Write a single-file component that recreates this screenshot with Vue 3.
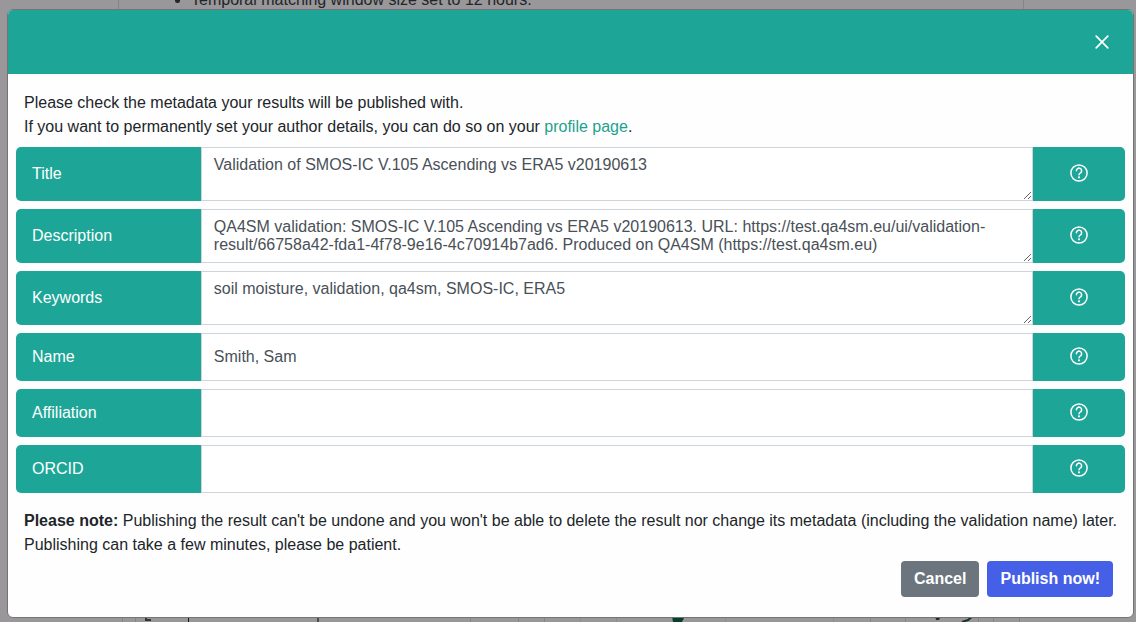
<script setup>
import { reactive } from 'vue'

const fields = reactive([
  { id: 'title', label: 'Title', multiline: true, value: 'Validation of SMOS-IC V.105 Ascending vs ERA5 v20190613' },
  {
    id: 'description',
    label: 'Description',
    multiline: true,
    value:
      'QA4SM validation: SMOS-IC V.105 Ascending vs ERA5 v20190613. URL: https://test.qa4sm.eu/ui/validation-result/66758a42-fda1-4f78-9e16-4c70914b7ad6. Produced on QA4SM (https://test.qa4sm.eu)',
  },
  { id: 'keywords', label: 'Keywords', multiline: true, value: 'soil moisture, validation, qa4sm, SMOS-IC, ERA5' },
  { id: 'name', label: 'Name', multiline: false, value: 'Smith, Sam' },
  { id: 'affiliation', label: 'Affiliation', multiline: false, value: '' },
  { id: 'orcid', label: 'ORCID', multiline: false, value: '' },
])
</script>

<template>
  <div class="page">
    <div class="behind">
      <div class="results">
        <ul>
          <li>Temporal matching window size set to 12 hours.</li>
        </ul>
      </div>
      <svg class="plots" viewBox="0 0 1136 6" preserveAspectRatio="none" aria-hidden="true">
        <path d="M122.500 0v6M135.500 0v6M470.500 0v6M518.500 0v6M544.500 0v6M870.500 0v6M905.500 0v6M978.500 0v6M993.500 0v6M1019.500 0v6" stroke="#858386" />
        <path d="M580.500 0v6M616.500 0v6M725.500 0v6M833.500 0v6" stroke="#8e8c8f" />
        <path d="M188.500 0v6" stroke="#151515" />
        <path d="M318 0v6" stroke="#4d4c4e" stroke-width="2" />
        <path d="M146 0v4h5" fill="none" stroke="#333" stroke-width="2" />
        <path d="M672 0h13l-3 6h-9z" fill="#073f2a" />
        <path d="M935 0h6l-2 4h-3z" fill="#222a28" />
        <path d="M962 6l6-2 5-4" fill="none" stroke="#17332d" stroke-width="2" />
      </svg>
    </div>

    <form class="modal" role="dialog" aria-modal="true" aria-label="Publish result" @submit.prevent>
      <header class="modal-header">
        <button type="button" class="close" aria-label="Close">
          <svg viewBox="0 0 14 14" aria-hidden="true"><path d="M1.200 1.200l11.600 11.600M12.800 1.200L1.200 12.800" /></svg>
        </button>
      </header>

      <div class="modal-body">
        <p class="text">
          Please check the metadata your results will be published with.<br />
          If you want to permanently set your author details, you can do so on your
          <a href="#profile">profile page</a>.
        </p>

        <div class="fields">
          <div v-for="field in fields" :key="field.id" class="row">
            <label :for="field.id">{{ field.label }}</label>
            <textarea v-if="field.multiline" :id="field.id" v-model="field.value" rows="2" spellcheck="false"></textarea>
            <input v-else :id="field.id" v-model="field.value" type="text" />
            <button type="button" class="help" :aria-label="`Help: ${field.label}`">
              <svg viewBox="0 0 18 18" aria-hidden="true">
                <circle cx="9" cy="9" r="8.100" />
                <path d="M6.400 6.800a2.600 2.600 0 1 1 4.200 2c-1 .700-1.600 1-1.600 2" />
                <circle class="dot" cx="9" cy="13.300" r="1.100" />
              </svg>
            </button>
          </div>
        </div>

        <p class="text">
          <b>Please note:</b> Publishing the result can't be undone and you won't be able to delete the result nor
          change its metadata (including the validation name) later. Publishing can take a few minutes, please be patient.
        </p>

        <div class="actions">
          <button type="button" class="action cancel">Cancel</button>
          <button type="submit" class="action publish">Publish now!</button>
        </div>
      </div>
    </form>
  </div>
</template>

<style>
body {
  margin: 0;
  background: #999799;
}
</style>

<style scoped>
.page {
  position: relative;
  box-sizing: border-box;
  min-height: 100vh;
  padding: 9px 2px 4px 7px;
  overflow: hidden;
  background: #999799;
  color: #212529;
  font: 16px/24px "Liberation Sans", Arial, sans-serif;
}
.page *,
.page *::before {
  box-sizing: border-box;
}
.behind {
  position: absolute;
  inset: 0;
  overflow: hidden;
}
.results {
  height: 100%;
  margin: 0 112px 0 118px;
  border: solid #868487;
  border-width: 0 1px;
}
.results ul {
  margin: -12px 0 0;
  padding-left: 72px;
}
.plots {
  position: absolute;
  bottom: 0;
  left: 0;
  width: 100%;
  height: 6px;
  background: #999799;
}
.modal {
  position: relative;
  overflow: hidden;
  border: 1px solid #737474;
  border-radius: 6px;
  background: #fefefe;
}
.modal-header {
  display: flex;
  align-items: center;
  justify-content: flex-end;
  height: 64px;
  padding: 0 15px;
  background: #1da697;
}
.close {
  display: flex;
  align-items: center;
  justify-content: center;
  width: 32px;
  height: 32px;
  padding: 0;
  border: 0;
  background: none;
}
.close svg {
  width: 14px;
  height: 14px;
  fill: none;
  stroke: #fff;
  stroke-width: 1.700;
  stroke-linecap: round;
}
.modal-body {
  padding: 17px 8px 20px;
}
.text {
  margin: 0;
  padding: 0 0 0 8px;
}
.text a {
  color: #1da18f;
  text-decoration: none;
}
.fields {
  display: grid;
  gap: 8px;
  margin: 8px 0 16px;
}
.row {
  display: grid;
  grid-template-columns: 2fr 9fr 1fr;
}
.row label {
  display: flex;
  align-items: center;
  padding: 0 16px;
  border-radius: 5px 0 0 5px;
  background: #1da697;
  color: #fff;
}
.row input,
.row textarea {
  display: block;
  width: 100%;
  min-width: 0;
  margin: 0;
  padding: 8px 12px;
  border: 1px solid #ced4da;
  border-radius: 0;
  outline: 0;
  background: #fff;
  color: #495057;
  font: 16px/18px "Liberation Sans", Arial, sans-serif;
}
.row input {
  height: 48px;
}
.row textarea {
  height: 54px;
  overflow: auto;
  resize: vertical;
}
.help {
  display: flex;
  align-items: center;
  justify-content: center;
  padding: 0 0 2px;
  border: 0;
  border-radius: 0 5px 5px 0;
  background: #1da697;
}
.help svg {
  width: 18px;
  height: 18px;
  fill: none;
  stroke: #fff;
  stroke-width: 1.500;
  stroke-linecap: round;
}
.help .dot {
  fill: #fff;
  stroke: none;
}
.actions {
  display: flex;
  justify-content: flex-end;
  gap: 8px;
  padding: 4px 12px 0;
}
.action {
  height: 36px;
  padding: 0 13px;
  border: 0;
  border-radius: 4px;
  color: #fff;
  font: bold 16px/24px "Liberation Sans", Arial, sans-serif;
}
.cancel {
  background: #6c757d;
}
.publish {
  background: #4560e6;
}
</style>
